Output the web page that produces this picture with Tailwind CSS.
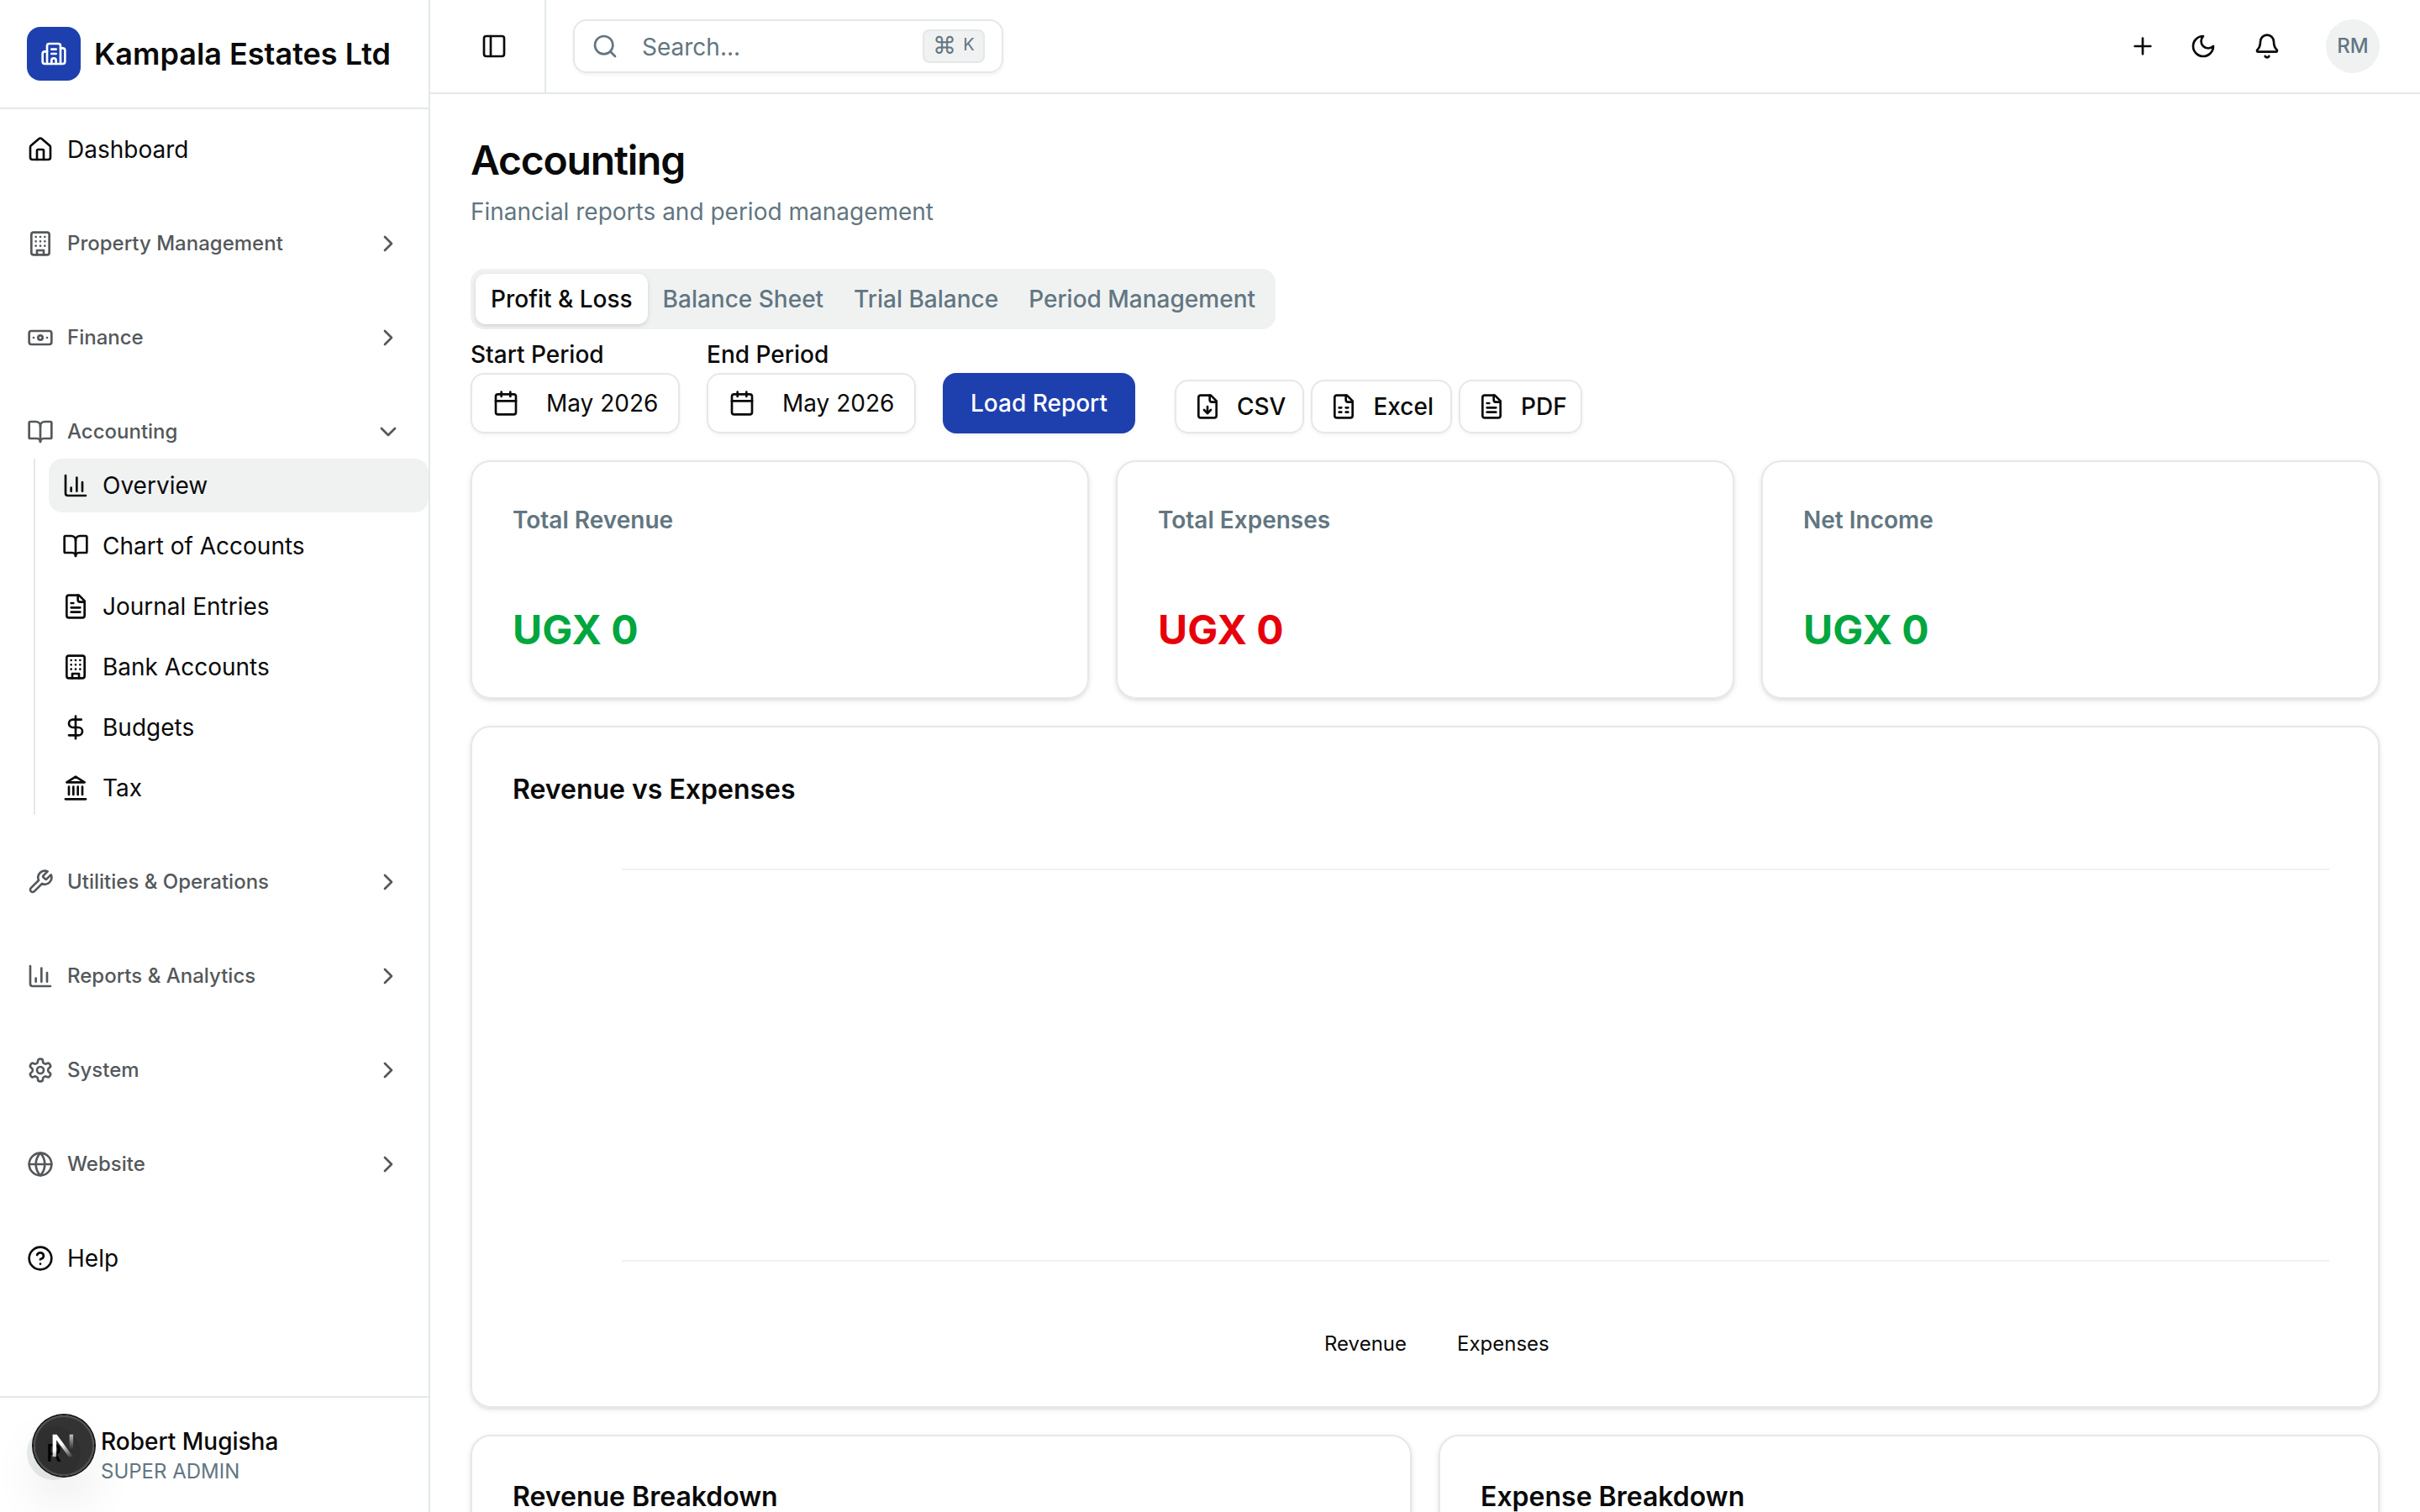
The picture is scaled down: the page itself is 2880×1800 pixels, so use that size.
<!DOCTYPE html>
<html lang="en">
<head>
<meta charset="utf-8">
<title>Accounting</title>
<script src="https://cdn.jsdelivr.net/npm/@tailwindcss/browser@4"></script>
</head>
<body class="overflow-hidden bg-white">
<div class="[zoom:2] flex h-[900px] w-[1440px] overflow-hidden bg-white text-[#0a0a0a] [font-family:Inter,sans-serif]">

  <aside class="flex h-full w-64 shrink-0 flex-col border-r border-[#e4e8e8]">
    <div class="flex h-[65px] shrink-0 items-start gap-2 border-b border-[#e4e8e8] pl-4 pt-4">
      <div class="flex size-8 items-center justify-center rounded-lg bg-[#1e40af] text-white">
        <svg class="size-4" viewBox="0 0 24 24" fill="none" stroke="currentColor" stroke-width="2" stroke-linecap="round" stroke-linejoin="round"><path d="M10 12h4"/><path d="M10 8h4"/><path d="M14 21v-3a2 2 0 0 0-4 0v3"/><path d="M6 10H4a2 2 0 0 0-2 2v7a2 2 0 0 0 2 2h16a2 2 0 0 0 2-2V9a2 2 0 0 0-2-2h-2"/><path d="M6 21V5a2 2 0 0 1 2-2h8a2 2 0 0 1 2 2v16"/></svg>
      </div>
      <span class="text-lg leading-8 font-semibold">Kampala Estates Ltd</span>
    </div>

    <nav class="flex flex-1 flex-col gap-6 pl-2 pr-2 pt-2">
      <a class="flex h-8 items-center gap-2 px-2 text-sm">
        <svg class="size-4" viewBox="0 0 24 24" fill="none" stroke="currentColor" stroke-width="2" stroke-linecap="round" stroke-linejoin="round"><path d="M15 21v-8a1 1 0 0 0-1-1h-4a1 1 0 0 0-1 1v8"/><path d="M3 10a2 2 0 0 1 .709-1.528l7-5.999a2 2 0 0 1 2.582 0l7 5.999A2 2 0 0 1 21 10v9a2 2 0 0 1-2 2H5a2 2 0 0 1-2-2z"/></svg>
        Dashboard
      </a>
      <a class="flex h-8 items-center gap-2 px-2 text-xs font-medium text-[#54585b]">
        <svg class="size-4" viewBox="0 0 24 24" fill="none" stroke="currentColor" stroke-width="2" stroke-linecap="round" stroke-linejoin="round"><rect width="16" height="20" x="4" y="2" rx="2" ry="2"/><path d="M9 22v-4h6v4"/><path d="M8 6h.01M16 6h.01M12 6h.01M12 10h.01M12 14h.01M16 10h.01M16 14h.01M8 10h.01M8 14h.01"/></svg>
        <span class="flex-1">Property Management</span>
        <svg class="size-4" viewBox="0 0 24 24" fill="none" stroke="currentColor" stroke-width="2" stroke-linecap="round" stroke-linejoin="round"><path d="m9 18 6-6-6-6"/></svg>
      </a>
      <a class="flex h-8 items-center gap-2 px-2 text-xs font-medium text-[#54585b]">
        <svg class="size-4" viewBox="0 0 24 24" fill="none" stroke="currentColor" stroke-width="2" stroke-linecap="round" stroke-linejoin="round"><rect width="20" height="12" x="2" y="6" rx="2"/><circle cx="12" cy="12" r="2"/><path d="M6 12h.01M18 12h.01"/></svg>
        <span class="flex-1">Finance</span>
        <svg class="size-4" viewBox="0 0 24 24" fill="none" stroke="currentColor" stroke-width="2" stroke-linecap="round" stroke-linejoin="round"><path d="m9 18 6-6-6-6"/></svg>
      </a>
      <div>
        <a class="flex h-8 items-center gap-2 px-2 text-xs font-medium text-[#54585b]">
          <svg class="size-4" viewBox="0 0 24 24" fill="none" stroke="currentColor" stroke-width="2" stroke-linecap="round" stroke-linejoin="round"><path d="M12 7v14"/><path d="M3 18a1 1 0 0 1-1-1V4a1 1 0 0 1 1-1h5a4 4 0 0 1 4 4 4 4 0 0 1 4-4h5a1 1 0 0 1 1 1v13a1 1 0 0 1-1 1h-6a3 3 0 0 0-3 3 3 3 0 0 0-3-3z"/></svg>
          <span class="flex-1">Accounting</span>
          <svg class="size-4" viewBox="0 0 24 24" fill="none" stroke="currentColor" stroke-width="2" stroke-linecap="round" stroke-linejoin="round"><path d="m6 9 6 6 6-6"/></svg>
        </a>
        <div class="-mr-2 ml-3 flex flex-col gap-1 border-l border-[#e4e8e8] pl-2 text-sm">
          <a class="flex h-8 items-center gap-2 rounded-lg bg-[#f0f2f2] px-2">
            <svg class="size-4" viewBox="0 0 24 24" fill="none" stroke="currentColor" stroke-width="2" stroke-linecap="round" stroke-linejoin="round"><path d="M3 3v16a2 2 0 0 0 2 2h16"/><path d="M18 17V9"/><path d="M13 17V5"/><path d="M8 17v-3"/></svg>
            Overview
          </a>
          <a class="flex h-8 items-center gap-2 px-2">
            <svg class="size-4" viewBox="0 0 24 24" fill="none" stroke="currentColor" stroke-width="2" stroke-linecap="round" stroke-linejoin="round"><path d="M12 7v14"/><path d="M3 18a1 1 0 0 1-1-1V4a1 1 0 0 1 1-1h5a4 4 0 0 1 4 4 4 4 0 0 1 4-4h5a1 1 0 0 1 1 1v13a1 1 0 0 1-1 1h-6a3 3 0 0 0-3 3 3 3 0 0 0-3-3z"/></svg>
            Chart of Accounts
          </a>
          <a class="flex h-8 items-center gap-2 px-2">
            <svg class="size-4" viewBox="0 0 24 24" fill="none" stroke="currentColor" stroke-width="2" stroke-linecap="round" stroke-linejoin="round"><path d="M15 2H6a2 2 0 0 0-2 2v16a2 2 0 0 0 2 2h12a2 2 0 0 0 2-2V7Z"/><path d="M14 2v4a2 2 0 0 0 2 2h4"/><path d="M10 9H8M16 13H8M16 17H8"/></svg>
            Journal Entries
          </a>
          <a class="flex h-8 items-center gap-2 px-2">
            <svg class="size-4" viewBox="0 0 24 24" fill="none" stroke="currentColor" stroke-width="2" stroke-linecap="round" stroke-linejoin="round"><rect width="16" height="20" x="4" y="2" rx="2" ry="2"/><path d="M9 22v-4h6v4"/><path d="M8 6h.01M16 6h.01M12 6h.01M12 10h.01M12 14h.01M16 10h.01M16 14h.01M8 10h.01M8 14h.01"/></svg>
            Bank Accounts
          </a>
          <a class="flex h-8 items-center gap-2 px-2">
            <svg class="size-4" viewBox="0 0 24 24" fill="none" stroke="currentColor" stroke-width="2" stroke-linecap="round" stroke-linejoin="round"><line x1="12" x2="12" y1="2" y2="22"/><path d="M17 5H9.5a3.5 3.5 0 0 0 0 7h5a3.5 3.5 0 0 1 0 7H6"/></svg>
            Budgets
          </a>
          <a class="flex h-8 items-center gap-2 px-2">
            <svg class="size-4" viewBox="0 0 24 24" fill="none" stroke="currentColor" stroke-width="2" stroke-linecap="round" stroke-linejoin="round"><line x1="3" x2="21" y1="22" y2="22"/><line x1="6" x2="6" y1="18" y2="11"/><line x1="10" x2="10" y1="18" y2="11"/><line x1="14" x2="14" y1="18" y2="11"/><line x1="18" x2="18" y1="18" y2="11"/><polygon points="12 2 20 7 4 7"/></svg>
            Tax
          </a>
        </div>
      </div>
      <a class="flex h-8 items-center gap-2 px-2 text-xs font-medium text-[#54585b]">
        <svg class="size-4" viewBox="0 0 24 24" fill="none" stroke="currentColor" stroke-width="2" stroke-linecap="round" stroke-linejoin="round"><path d="M14.7 6.3a1 1 0 0 0 0 1.4l1.6 1.6a1 1 0 0 0 1.4 0l3.77-3.77a6 6 0 0 1-7.94 7.94l-6.91 6.91a2.12 2.12 0 0 1-3-3l6.91-6.91a6 6 0 0 1 7.94-7.94l-3.76 3.76z"/></svg>
        <span class="flex-1">Utilities &amp; Operations</span>
        <svg class="size-4" viewBox="0 0 24 24" fill="none" stroke="currentColor" stroke-width="2" stroke-linecap="round" stroke-linejoin="round"><path d="m9 18 6-6-6-6"/></svg>
      </a>
      <a class="flex h-8 items-center gap-2 px-2 text-xs font-medium text-[#54585b]">
        <svg class="size-4" viewBox="0 0 24 24" fill="none" stroke="currentColor" stroke-width="2" stroke-linecap="round" stroke-linejoin="round"><path d="M3 3v16a2 2 0 0 0 2 2h16"/><path d="M18 17V9"/><path d="M13 17V5"/><path d="M8 17v-3"/></svg>
        <span class="flex-1">Reports &amp; Analytics</span>
        <svg class="size-4" viewBox="0 0 24 24" fill="none" stroke="currentColor" stroke-width="2" stroke-linecap="round" stroke-linejoin="round"><path d="m9 18 6-6-6-6"/></svg>
      </a>
      <a class="flex h-8 items-center gap-2 px-2 text-xs font-medium text-[#54585b]">
        <svg class="size-4" viewBox="0 0 24 24" fill="none" stroke="currentColor" stroke-width="2" stroke-linecap="round" stroke-linejoin="round"><path d="M12.22 2h-.44a2 2 0 0 0-2 2v.18a2 2 0 0 1-1 1.73l-.43.25a2 2 0 0 1-2 0l-.15-.08a2 2 0 0 0-2.73.73l-.22.38a2 2 0 0 0 .73 2.73l.15.1a2 2 0 0 1 1 1.72v.51a2 2 0 0 1-1 1.74l-.15.09a2 2 0 0 0-.73 2.73l.22.38a2 2 0 0 0 2.73.73l.15-.08a2 2 0 0 1 2 0l.43.25a2 2 0 0 1 1 1.73V20a2 2 0 0 0 2 2h.44a2 2 0 0 0 2-2v-.18a2 2 0 0 1 1-1.73l.43-.25a2 2 0 0 1 2 0l.15.08a2 2 0 0 0 2.73-.73l.22-.39a2 2 0 0 0-.73-2.73l-.15-.08a2 2 0 0 1-1-1.74v-.5a2 2 0 0 1 1-1.74l.15-.09a2 2 0 0 0 .73-2.73l-.22-.38a2 2 0 0 0-2.73-.73l-.15.08a2 2 0 0 1-2 0l-.43-.25a2 2 0 0 1-1-1.73V4a2 2 0 0 0-2-2z"/><circle cx="12" cy="12" r="3"/></svg>
        <span class="flex-1">System</span>
        <svg class="size-4" viewBox="0 0 24 24" fill="none" stroke="currentColor" stroke-width="2" stroke-linecap="round" stroke-linejoin="round"><path d="m9 18 6-6-6-6"/></svg>
      </a>
      <a class="flex h-8 items-center gap-2 px-2 text-xs font-medium text-[#54585b]">
        <svg class="size-4" viewBox="0 0 24 24" fill="none" stroke="currentColor" stroke-width="2" stroke-linecap="round" stroke-linejoin="round"><circle cx="12" cy="12" r="10"/><path d="M12 2a14.5 14.5 0 0 0 0 20 14.5 14.5 0 0 0 0-20"/><path d="M2 12h20"/></svg>
        <span class="flex-1">Website</span>
        <svg class="size-4" viewBox="0 0 24 24" fill="none" stroke="currentColor" stroke-width="2" stroke-linecap="round" stroke-linejoin="round"><path d="m9 18 6-6-6-6"/></svg>
      </a>
      <a class="flex h-8 items-center gap-2 px-2 text-sm">
        <svg class="size-4" viewBox="0 0 24 24" fill="none" stroke="currentColor" stroke-width="2" stroke-linecap="round" stroke-linejoin="round"><circle cx="12" cy="12" r="10"/><path d="M9.09 9a3 3 0 0 1 5.83 1c0 2-3 3-3 3"/><path d="M12 17h.01"/></svg>
        Help
      </a>
    </nav>

    <div class="relative flex h-[69px] shrink-0 items-center gap-3 border-t border-[#e4e8e8] pb-0.5 pl-4">
      <div class="flex size-8 items-center justify-center rounded-full bg-[#e9ecec] text-sm font-medium text-black">R</div>
      <div class="mt-[5px] flex flex-col">
        <span class="text-sm leading-[17px] font-medium">Robert Mugisha</span>
        <span class="text-xs leading-[19px] text-[#627681]">SUPER ADMIN</span>
      </div>
      <div class="absolute left-[20px] top-[10.5px] flex size-9 items-center justify-center rounded-full bg-black/80 shadow-[0_0_0_1px_#171717,inset_0_0_0_1px_rgba(255,255,255,0.14),0_16px_32px_-8px_rgba(0,0,0,0.24)]">
        <svg class="size-5" viewBox="0 0 18 18" fill="none"><defs><linearGradient id="ng1" x1="5" y1="4" x2="14" y2="15" gradientUnits="userSpaceOnUse"><stop offset="0.35" stop-color="#fff"/><stop offset="1" stop-color="#fff" stop-opacity="0"/></linearGradient><linearGradient id="ng2" x1="13" y1="3" x2="13" y2="11" gradientUnits="userSpaceOnUse"><stop stop-color="#fff" stop-opacity="0.7"/><stop offset="1" stop-color="#fff" stop-opacity="0"/></linearGradient></defs><path d="M3 3h2.2L14 15h-2.4L5 6v9H3z" fill="url(#ng1)"/><path d="M12 3h2v9h-2z" fill="url(#ng2)"/></svg>
      </div>
    </div>
  </aside>

  <div class="flex h-full min-w-0 flex-1 flex-col">
    <header class="flex h-14 shrink-0 items-center border-b border-[#e4e8e8]">
      <div class="flex h-full w-[69px] shrink-0 items-center border-r border-[#e4e8e8] pl-[30px]">
        <svg class="size-4" viewBox="0 0 24 24" fill="none" stroke="currentColor" stroke-width="2" stroke-linecap="round" stroke-linejoin="round"><rect width="18" height="18" x="3" y="3" rx="2"/><path d="M9 3v18"/></svg>
      </div>
      <div class="ml-4 flex h-8 w-64 items-center rounded-lg border border-[#e4e8e8] pl-2.5 pr-2.5 shadow-xs">
        <svg class="size-4 text-[#627681]" viewBox="0 0 24 24" fill="none" stroke="currentColor" stroke-width="2" stroke-linecap="round" stroke-linejoin="round"><path d="m21 21-4.34-4.34"/><circle cx="11" cy="11" r="8"/></svg>
        <span class="ml-3.5 flex-1 pt-px text-sm text-[#627681]">Search...</span>
        <span class="flex h-5 w-[37px] items-center justify-center gap-1 rounded border border-[#e4e8e8] bg-[#f0f2f2] text-[10px] text-[#627681]"><span class="text-sm leading-none font-light [font-family:'DejaVu_Sans',sans-serif]">⌘</span><span class="-mt-0.5">K</span></span>
      </div>
      <div class="ml-auto flex items-center pr-6">
        <div class="flex size-9 items-center justify-center"><svg class="size-4" viewBox="0 0 24 24" fill="none" stroke="currentColor" stroke-width="2" stroke-linecap="round" stroke-linejoin="round"><path d="M5 12h14M12 5v14"/></svg></div>
        <div class="flex size-9 items-center justify-center"><svg class="size-4" viewBox="0 0 24 24" fill="none" stroke="currentColor" stroke-width="2" stroke-linecap="round" stroke-linejoin="round"><path d="M12 3a6 6 0 0 0 9 9 9 9 0 1 1-9-9Z"/></svg></div>
        <div class="ml-0.5 flex size-9 items-center justify-center"><svg class="size-4" viewBox="0 0 24 24" fill="none" stroke="currentColor" stroke-width="2" stroke-linecap="round" stroke-linejoin="round"><path d="M10.268 21a2 2 0 0 0 3.464 0"/><path d="M3.262 15.326A1 1 0 0 0 4 17h16a1 1 0 0 0 .74-1.673C19.41 13.956 18 12.499 18 8A6 6 0 0 0 6 8c0 4.499-1.411 5.956-2.738 7.326"/></svg></div>
        <div class="ml-[17px] flex size-8 items-center justify-center rounded-full bg-[#f0f2f2] text-xs font-medium text-[#627681]">RM</div>
      </div>
    </header>

    <main class="min-h-0 flex-1 overflow-hidden p-6">
      <h1 class="text-2xl leading-[31px] font-semibold tracking-tight">Accounting</h1>
      <p class="mt-[5px] text-sm text-[#627681]">Financial reports and period management</p>

      <div class="mt-6 inline-flex h-9 items-center rounded-lg bg-[#f0f2f2] p-[3px] text-sm font-medium text-[#627681]">
        <span class="flex h-[30px] items-center rounded-md border border-transparent bg-white px-2 text-[#0a0a0a] shadow-sm">Profit &amp; Loss</span>
        <span class="flex h-[30px] items-center border border-transparent px-2">Balance Sheet</span>
        <span class="flex h-[30px] items-center border border-transparent px-2">Trial Balance</span>
        <span class="flex h-[30px] items-center border border-transparent px-2">Period Management</span>
      </div>

      <div class="mt-2 flex items-end">
        <div class="flex flex-col gap-1">
          <span class="text-sm leading-none font-medium">Start Period</span>
          <span class="flex h-9 w-[124.5px] items-center gap-4 rounded-lg border border-[#e4e8e8] px-3 text-sm whitespace-nowrap shadow-xs">
            <svg class="size-4 shrink-0" viewBox="0 0 24 24" fill="none" stroke="currentColor" stroke-width="2" stroke-linecap="round" stroke-linejoin="round"><path d="M8 2v4M16 2v4"/><rect width="18" height="18" x="3" y="4" rx="2"/><path d="M3 10h18"/></svg>
            May 2026
          </span>
        </div>
        <div class="ml-4 flex flex-col gap-1">
          <span class="text-sm leading-none font-medium">End Period</span>
          <span class="flex h-9 w-[124.5px] items-center gap-4 rounded-lg border border-[#e4e8e8] px-3 text-sm whitespace-nowrap shadow-xs">
            <svg class="size-4 shrink-0" viewBox="0 0 24 24" fill="none" stroke="currentColor" stroke-width="2" stroke-linecap="round" stroke-linejoin="round"><path d="M8 2v4M16 2v4"/><rect width="18" height="18" x="3" y="4" rx="2"/><path d="M3 10h18"/></svg>
            May 2026
          </span>
        </div>
        <button class="ml-4 flex h-9 items-center rounded-lg bg-[#1e40af] px-[16.5px] text-sm font-medium text-white shadow-xs">Load Report</button>
        <div class="ml-[23.5px] flex gap-1">
          <span class="flex h-8 items-center gap-[9.5px] rounded-lg border border-[#e4e8e8] pl-[10.5px] pr-2.5 text-sm font-medium shadow-xs">
            <svg class="size-4" viewBox="0 0 24 24" fill="none" stroke="currentColor" stroke-width="2" stroke-linecap="round" stroke-linejoin="round"><path d="M15 2H6a2 2 0 0 0-2 2v16a2 2 0 0 0 2 2h12a2 2 0 0 0 2-2V7Z"/><path d="M14 2v4a2 2 0 0 0 2 2h4"/><path d="M12 18v-6"/><path d="m9 15 3 3 3-3"/></svg>
            CSV
          </span>
          <span class="flex h-8 items-center gap-[9.5px] rounded-lg border border-[#e4e8e8] pl-[10.5px] pr-2.5 text-sm font-medium shadow-xs">
            <svg class="size-4" viewBox="0 0 24 24" fill="none" stroke="currentColor" stroke-width="2" stroke-linecap="round" stroke-linejoin="round"><path d="M15 2H6a2 2 0 0 0-2 2v16a2 2 0 0 0 2 2h12a2 2 0 0 0 2-2V7Z"/><path d="M14 2v4a2 2 0 0 0 2 2h4"/><path d="M8 13h2M14 13h2M8 17h2M14 17h2"/></svg>
            Excel
          </span>
          <span class="flex h-8 items-center gap-[9.5px] rounded-lg border border-[#e4e8e8] pl-[10.5px] pr-2 text-sm font-medium shadow-xs">
            <svg class="size-4" viewBox="0 0 24 24" fill="none" stroke="currentColor" stroke-width="2" stroke-linecap="round" stroke-linejoin="round"><path d="M15 2H6a2 2 0 0 0-2 2v16a2 2 0 0 0 2 2h12a2 2 0 0 0 2-2V7Z"/><path d="M14 2v4a2 2 0 0 0 2 2h4"/><path d="M10 9H8M16 13H8M16 17H8"/></svg>
            PDF
          </span>
        </div>
      </div>

      <div class="mt-4 grid grid-cols-3 gap-4">
        <div class="h-[142px] rounded-xl border border-[#e4e8e8] px-6 pt-[24.5px] shadow-sm">
          <p class="text-sm font-semibold text-[#627681]">Total Revenue</p>
          <p class="mt-[39.5px] text-2xl font-bold text-green-600">UGX 0</p>
        </div>
        <div class="h-[142px] rounded-xl border border-[#e4e8e8] px-6 pt-[24.5px] shadow-sm">
          <p class="text-sm font-semibold text-[#627681]">Total Expenses</p>
          <p class="mt-[39.5px] text-2xl font-bold text-red-600">UGX 0</p>
        </div>
        <div class="h-[142px] rounded-xl border border-[#e4e8e8] px-6 pt-[24.5px] shadow-sm">
          <p class="text-sm font-semibold text-[#627681]">Net Income</p>
          <p class="mt-[39.5px] text-2xl font-bold text-green-600">UGX 0</p>
        </div>
      </div>

      <div class="mt-4 h-[406px] rounded-xl border border-[#e4e8e8] px-6 pt-[25px] shadow-sm">
        <h2 class="text-base font-semibold">Revenue vs Expenses</h2>
        <div class="ml-[65px] mr-[5px] mt-[35px] h-px bg-[#f0f2f2]"></div>
        <div class="ml-[65px] mr-[5px] mt-[232px] h-px bg-[#f0f2f2]"></div>
        <div class="ml-[483px] mt-[41px] flex gap-[30px] text-xs">
          <span>Revenue</span>
          <span>Expenses</span>
        </div>
      </div>

      <div class="mt-4 grid grid-cols-2 gap-4">
        <div class="h-64 rounded-xl border border-[#e4e8e8] px-6 pt-6 shadow-sm"><h2 class="text-base font-semibold">Revenue Breakdown</h2></div>
        <div class="h-64 rounded-xl border border-[#e4e8e8] px-6 pt-6 shadow-sm"><h2 class="text-base font-semibold">Expense Breakdown</h2></div>
      </div>
    </main>
  </div>
</div>
</body>
</html>
